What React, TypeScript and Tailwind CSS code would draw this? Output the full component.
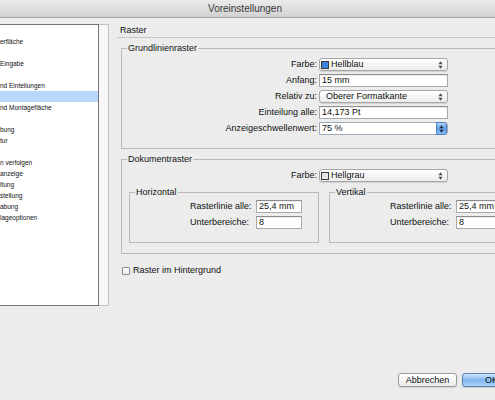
import type { ReactNode } from 'react';

const SIDEBAR = [
  '',
  'erfläche',
  '',
  'Eingabe',
  '',
  'nd Einteilungen',
  '',
  'nd Montagefläche',
  '',
  'bung',
  'tur',
  '',
  'n verfolgen',
  'anzeige',
  'ltung',
  'stellung',
  'abung',
  'lageoptionen',
];
const SELECTED = 6;

function UpDown({ className }: { className?: string }) {
  return (
    <svg width="5" height="8" viewBox="0 0 5 8" className={className}>
      <path d="M2.5 0.3L4.6 3.2H0.4Z M2.5 7.7L0.4 4.8H4.6Z" fill="currentColor" />
    </svg>
  );
}

function PopUp({ value, swatch }: { value: string; swatch?: string }) {
  return (
    <div className="flex h-[13px] w-[129px] items-center rounded-[3px] border border-[#a6a6a6] bg-gradient-to-b from-white to-[#ececec] pr-[4px] shadow-[0_1px_1px_rgba(0,0,0,0.12)]">
      {swatch ? (
        <span className={`ml-[1px] mr-[2px] h-[8px] w-[8px] border border-[#3a3a3a] ${swatch}`} />
      ) : (
        <span className="w-[6px]" />
      )}
      <span className="flex-1 leading-[11px]">{value}</span>
      <UpDown className="text-[#4a4a4a]" />
    </div>
  );
}

function Field({ value, width = 'w-[129px]' }: { value: string; width?: string }) {
  return (
    <div
      className={`flex h-[13px] ${width} items-center border border-[#a9a9a9] border-t-[#8e8e8e] bg-white pl-[2px] leading-[11px] shadow-[inset_0_1px_1px_rgba(0,0,0,0.08)]`}
    >
      {value}
    </div>
  );
}

function Stepper({ value }: { value: string }) {
  return (
    <div className="flex h-[13px] w-[129px] items-center rounded-r-[3px] border border-[#9fa9b8] bg-white pl-[2px] leading-[11px]">
      <span className="flex-1">{value}</span>
      <span className="flex h-[13px] w-[11px] items-center justify-center rounded-r-[3px] border border-[#4d7fc4] bg-gradient-to-b from-[#b4d4f6] via-[#5f9de6] to-[#8bbdf1]">
        <UpDown className="text-[#1b2a3c]" />
      </span>
    </div>
  );
}

function Row({ label, children }: { label: string; children: ReactNode }) {
  return (
    <div className="flex h-[13px] items-center">
      <span className="w-[195px] text-right">{label}</span>
      <span className="ml-[2px]">{children}</span>
    </div>
  );
}

function Group({ title, className, children }: { title: string; className?: string; children: ReactNode }) {
  return (
    <fieldset className={`border border-[#bababa] ${className ?? ''}`}>
      <legend className="ml-[5px] px-[1px] leading-[11px]">{title}</legend>
      {children}
    </fieldset>
  );
}

function SubGrid({ title }: { title: string }) {
  return (
    <Group title={title} className="w-[190px] pb-[13px] pt-[2px]">
      <div className="flex flex-col gap-[3px] pl-[60px]">
        <div className="flex h-[13px] items-center">
          <span className="w-[66px]">Rasterlinie alle:</span>
          <Field value="25,4 mm" width="w-[46px]" />
        </div>
        <div className="flex h-[13px] items-center">
          <span className="w-[66px]">Unterbereiche:</span>
          <Field value="8" width="w-[46px]" />
        </div>
      </div>
    </Group>
  );
}

export default function App() {
  return (
    <div className="relative h-[400px] w-[495px] overflow-hidden bg-[#ececec] font-['Liberation_Sans',Arial,sans-serif] text-[9px] text-[#111]">
      <div className="flex h-[18px] w-[495px] items-center justify-center border-b border-[#a3a3a3] bg-gradient-to-b from-[#ebebeb] to-[#d2d2d2] pr-[5px] text-[10px] text-[#3a3a3a]">
        Voreinstellungen
      </div>

      <div className="flex h-[382px] w-[540px]">
        <div className="mt-[6px] flex h-[282px]">
          <div className="w-[99px] border-y border-r border-[#767676] bg-white text-[6.5px] leading-[11px] text-[#111]">
            {SIDEBAR.map((item, i) => (
              <div key={i} className={`h-[11px] whitespace-nowrap ${i === SELECTED ? 'bg-[#b9d6fb]' : ''}`}>
                {item}
              </div>
            ))}
          </div>
          <div className="w-[10px] border-y border-r border-[#c2c2c2] bg-[#f7f7f7]" />
        </div>

        <div className="ml-[8px] flex flex-1 flex-col">
          <div className="mt-[6px] h-[14px] border-b border-[#c6c6c6] pl-[3px] leading-[13px]">Raster</div>

          <Group title="Grundlinienraster" className="ml-[4px] mt-[5px] w-[405px] pb-[13px] pt-[4px]">
            <div className="flex flex-col gap-[3px]">
              <Row label="Farbe:">
                <PopUp value="Hellblau" swatch="bg-[#3d82dc]" />
              </Row>
              <Row label="Anfang:">
                <Field value="15 mm" />
              </Row>
              <Row label="Relativ zu:">
                <PopUp value="Oberer Formatkante" />
              </Row>
              <Row label="Einteilung alle:">
                <Field value="14,173 Pt" />
              </Row>
              <Row label="Anzeigeschwellenwert:">
                <Stepper value="75 %" />
              </Row>
            </div>
          </Group>

          <Group title="Dokumentraster" className="ml-[4px] mt-[5px] w-[405px] pb-[10px] pt-[4px]">
            <Row label="Farbe:">
              <PopUp value="Hellgrau" swatch="bg-[#e6e6e6]" />
            </Row>
            <div className="ml-[7px] mt-[5px] flex gap-[10px]">
              <SubGrid title="Horizontal" />
              <SubGrid title="Vertikal" />
            </div>
          </Group>

          <label className="ml-[5px] mt-[11px] flex items-center gap-[3px]">
            <span className="h-[8px] w-[8px] rounded-[1px] border border-[#8c8c8c] bg-gradient-to-b from-white to-[#e9e9e9]" />
            <span className="leading-[11px]">Raster im Hintergrund</span>
          </label>

          <div className="mt-auto flex justify-end gap-[5px] pb-[13px] pr-[19px]">
            <button className="h-[14px] w-[59px] rounded-[3px] border border-[#9b9b9b] bg-gradient-to-b from-white to-[#ebebeb] leading-[12px] shadow-[0_1px_1px_rgba(0,0,0,0.12)]">
              Abbrechen
            </button>
            <button className="h-[14px] w-[59px] rounded-[3px] border border-[#5b7fb0] bg-gradient-to-b from-[#d3e8fc] via-[#7fb6ef] to-[#acd3f8] leading-[12px] shadow-[0_1px_1px_rgba(0,0,0,0.15)]">
              OK
            </button>
          </div>
        </div>
      </div>
    </div>
  );
}
